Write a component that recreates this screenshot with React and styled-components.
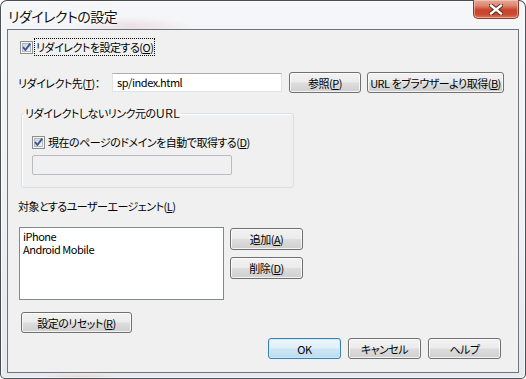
import styled, { createGlobalStyle } from "styled-components"

const GlobalStyle = createGlobalStyle`
  html, body {
    margin: 0;
    padding: 0;
    width: 526px;
    height: 379px;
    overflow: hidden;
    background: #ffffff;
  }
  * { box-sizing: border-box; }
`

const uiFont = `"Noto Sans CJK JP", "Noto Sans", sans-serif`

// ---- window frame ----

const Window = styled.div`
  width: 526px;
  height: 379px;
  display: flex;
  flex-direction: column;
  padding: 0 6px 5px 6px;
  border: 1px solid rgba(20, 24, 30, 0.75);
  border-radius: 7px 7px 5px 5px;
  background:
    radial-gradient(ellipse 60px 10px at 130px 26px, rgba(210, 150, 160, 0.25), transparent),
    radial-gradient(ellipse 40px 6px at 80px 378px, rgba(240, 150, 110, 0.35), transparent),
    linear-gradient(180deg, #f5f6f8 0%, #eef0f3 60%, #e6e9ed 100%);
  box-shadow: inset 1px 1px 0 rgba(255, 255, 255, 0.8), inset -1px -1px 0 rgba(255, 255, 255, 0.6);
  font-family: ${uiFont};
  font-feature-settings: "palt";
  color: #000;
`

const TitleBar = styled.div`
  height: 28px;
  display: flex;
  align-items: flex-start;
  justify-content: space-between;
`

const Title = styled.div`
  padding: 6px 0 0 1px;
  font-size: 14px;
  letter-spacing: -0.5px;
  line-height: 18px;
  color: #111;
  text-shadow: 0 0 6px #fff, 0 0 3px #fff;
`

const CloseButton = styled.div`
  width: 46px;
  height: 19px;
  margin-top: -1px;
  border: 1px solid #8a3a2c;
  border-top: none;
  border-radius: 0 0 5px 5px;
  background: linear-gradient(180deg, #e8a798 0%, #dc8a72 30%, #c8452c 55%, #c94a30 80%, #d9775c 100%);
  box-shadow: inset 0 0 0 1px rgba(255, 220, 210, 0.5);
  display: flex;
  align-items: center;
  justify-content: center;
`

const Client = styled.div`
  flex: 1;
  display: flex;
  flex-direction: column;
  border: 1px solid #6f757b;
  background: #f0f0f0;
  font-size: 11px;
  letter-spacing: -0.5px;
  line-height: 16px;
`

// ---- controls ----

const Key = styled.u`
  text-decoration: underline;
  text-underline-offset: 1px;
`

const CheckRow = styled.div`
  display: flex;
  align-items: center;
  height: 18px;
  margin-top: ${p => p.$top}px;
  padding-left: ${p => p.$left}px;
`

const CheckLabel = styled.span`
  margin-left: 1px;
  padding: 0 1px;
  height: 18px;
  line-height: 16px;
  border: 1px dotted ${p => (p.$focus ? "#000" : "transparent")};
  white-space: nowrap;
`

const Row = styled.div`
  display: flex;
  align-items: center;
  margin-top: ${p => p.$top}px;
  padding-left: ${p => p.$left}px;
`

const FieldLabel = styled.span`
  width: ${p => (p.$width ? `${p.$width}px` : "auto")};
  white-space: nowrap;
`

const TextBox = styled.div`
  width: ${p => p.$width}px;
  height: ${p => p.$height}px;
  padding: 0 4px;
  border: 1px solid #dfe3e8;
  border-top-color: #abadb3;
  background: ${p => (p.$disabled ? "#f0f0f0" : "#ffffff")};
  ${p => p.$disabled && "border-color: #b9bdc1; border-radius: 2px;"}
  line-height: 17px;
  margin-left: ${p => p.$left || 0}px;
`

const Button = styled.div`
  width: ${p => p.$width}px;
  height: ${p => p.$height || 21}px;
  margin-left: ${p => p.$left || 0}px;
  margin-top: ${p => p.$top || 0}px;
  display: flex;
  align-items: center;
  justify-content: center;
  white-space: nowrap;
  border: 1px solid ${p => (p.$default ? "#3c7fb1" : "#707070")};
  border-radius: 3px;
  background: ${p =>
    p.$default
      ? "linear-gradient(180deg, #ecf5fb 0%, #e1eff9 48%, #cde6f5 52%, #bcdcef 100%)"
      : "linear-gradient(180deg, #f2f2f2 0%, #ebebeb 48%, #dddddd 52%, #cfcfcf 100%)"};
  box-shadow: inset 0 0 0 1px ${p => (p.$default ? "rgba(200, 235, 255, 0.9)" : "rgba(255, 255, 255, 0.75)")};
`

const GroupBox = styled.fieldset`
  margin: 12px 0 0 13px;
  width: 273px;
  height: 83px;
  padding: 0 10px 0 10px;
  border: 1px solid #d5dfe5;
  border-radius: 3px;
  box-shadow: inset 1px 1px 0 #ffffff;
  display: flex;
  flex-direction: column;
`

const Legend = styled.legend`
  margin-left: -8px;
  padding: 0 1px;
  font-size: 11px;
  line-height: 16px;
`

const ListArea = styled.div`
  display: flex;
  align-items: flex-start;
  margin-top: 13px;
  padding-left: 11px;
`

const ListBox = styled.div`
  width: 205px;
  height: 73px;
  border: 1px solid #828790;
  background: #ffffff;
  padding: 2px 3px;
  line-height: 13px;
`

const SideButtons = styled.div`
  display: flex;
  flex-direction: column;
  margin-left: 6px;
  padding-top: 1px;
  gap: 7px;
`

const Footer = styled.div`
  display: flex;
  justify-content: flex-end;
  gap: 7px;
  margin-top: 5px;
  padding-right: 17px;
`

function CheckBox() {
  return (
    <svg width="13" height="13" viewBox="0 0 13 13">
      <defs>
        <linearGradient id="cbg" x1="0" y1="0" x2="1" y2="1">
          <stop offset="0" stopColor="#cbcfd5" />
          <stop offset="1" stopColor="#f6f6f6" />
        </linearGradient>
      </defs>
      <rect x="0.5" y="0.5" width="12" height="12" fill="#f4f4f4" stroke="#8e8f8f" />
      <rect x="2.5" y="2.5" width="8" height="8" fill="url(#cbg)" stroke="#b5b8bd" />
      <path d="M3 6.2 L5.4 9 L10.2 2.6" fill="none" stroke="#3a55a0" strokeWidth="1.9" strokeLinejoin="round" />
    </svg>
  )
}

function CloseGlyph() {
  return (
    <svg width="14" height="11" viewBox="0 0 14 11">
      <path d="M2 1.5 L12 9.5 M12 1.5 L2 9.5" stroke="#4a2418" strokeWidth="4.2" strokeLinecap="square" />
      <path d="M2 1.5 L12 9.5 M12 1.5 L2 9.5" stroke="#ffffff" strokeWidth="2.4" strokeLinecap="square" />
    </svg>
  )
}

export default function App() {
  return (
    <>
      <GlobalStyle />
      <Window>
        <TitleBar>
          <Title>リダイレクトの設定</Title>
          <CloseButton>
            <CloseGlyph />
          </CloseButton>
        </TitleBar>
        <Client>
          <CheckRow $top={8} $left={12}>
            <CheckBox />
            <CheckLabel $focus>
              リダイレクトを設定する(<Key>O</Key>)
            </CheckLabel>
          </CheckRow>

          <Row $top={16} $left={10}>
            <FieldLabel $width={94}>
              リダイレクト先(<Key>T</Key>)：
            </FieldLabel>
            <TextBox $width={170} $height={19}>sp/index.html</TextBox>
            <Button $width={72} $left={7}>
              参照(<Key>P</Key>)
            </Button>
            <Button $width={137} $left={6}>
              URL をブラウザーより取得(<Key>B</Key>)
            </Button>
          </Row>

          <GroupBox>
            <Legend>リダイレクトしないリンク元のＵＲＬ</Legend>
            <CheckRow $top={12} $left={0}>
              <CheckBox />
              <CheckLabel>
                現在のページのドメインを自動で取得する(<Key>D</Key>)
              </CheckLabel>
            </CheckRow>
            <Row $top={4} $left={0}>
              <TextBox $width={200} $height={20} $disabled />
            </Row>
          </GroupBox>

          <Row $top={10} $left={10}>
            <FieldLabel>
              対象とするユーザーエージェント(<Key>L</Key>)
            </FieldLabel>
          </Row>

          <ListArea>
            <ListBox>
              <div>iPhone</div>
              <div>Android Mobile</div>
            </ListBox>
            <SideButtons>
              <Button $width={73} $height={22}>
                追加(<Key>A</Key>)
              </Button>
              <Button $width={73} $height={22}>
                削除(<Key>D</Key>)
              </Button>
            </SideButtons>
          </ListArea>

          <Row $top={12} $left={13}>
            <Button $width={111}>
              設定のリセット(<Key>R</Key>)
            </Button>
          </Row>

          <Footer>
            <Button $width={73} $default>OK</Button>
            <Button $width={73}>キャンセル</Button>
            <Button $width={73}>ヘルプ</Button>
          </Footer>
        </Client>
      </Window>
    </>
  )
}
